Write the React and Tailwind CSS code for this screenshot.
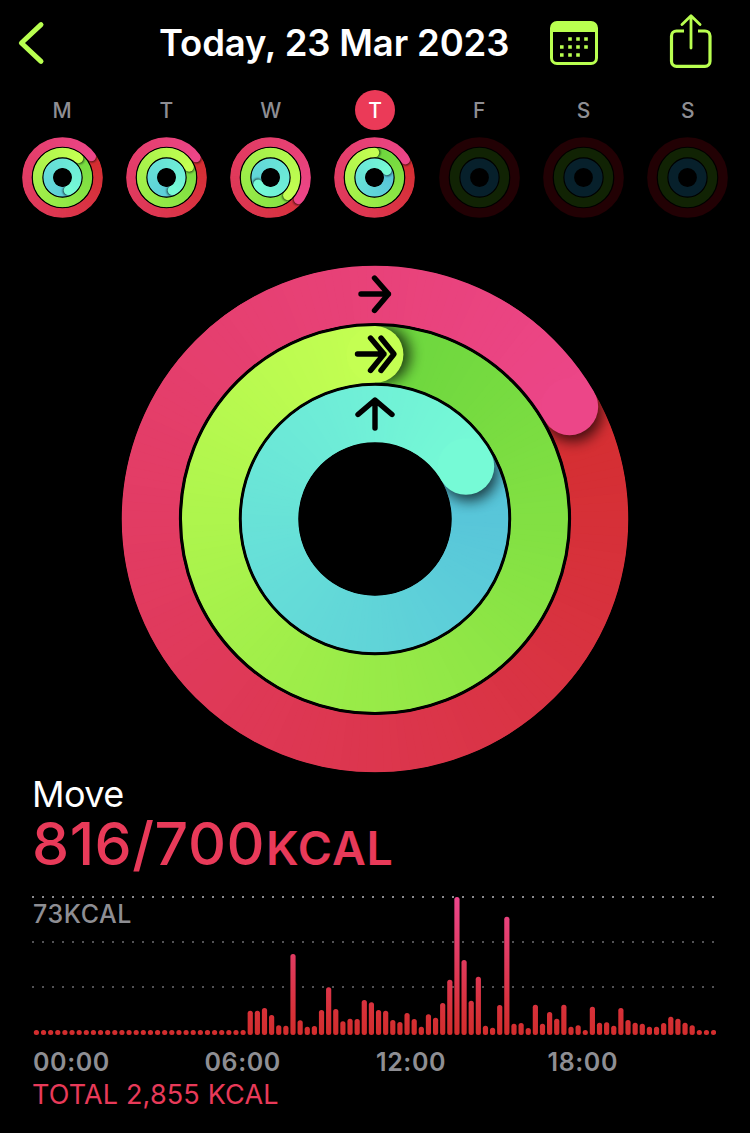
import React from 'react';

const CENTER = 256;

const COLORS = {
  move: { from: [208, 42, 34], to: [236, 70, 136] },
  exercise: { from: [108, 214, 62], to: [196, 255, 82] },
  stand: { from: [80, 184, 218], to: [118, 250, 214] },
};

const DIM = { move: '#220104', exercise: '#112304', stand: '#07202b' };

const LARGE = [
  { id: 'move', r: 224.7, w: 57.2 },
  { id: 'exercise', r: 164.6, w: 56.8 },
  { id: 'stand', r: 105, w: 56.6 },
];

const SMALL = [
  { id: 'move', r: 225, w: 60 },
  { id: 'exercise', r: 157.5, w: 60 },
  { id: 'stand', r: 90, w: 61 },
];

const DAYS = [
  { label: 'M', ends: [414, 400, 515] },
  { label: 'T', ends: [416, 425, 515] },
  { label: 'W', ends: [488, 496, 601] },
  { label: 'T', ends: [420, 360, 420], today: true },
  { label: 'F' },
  { label: 'S' },
  { label: 'S' },
];

const BARS = [
  ...Array(30).fill(5),
  24.3, 24.3, 27, 20, 9.7, 9.3, 81, 14.7, 8.3, 9, 25, 47.7, 26, 13.7, 16.3, 16, 35, 32.7,
  25, 24.3, 15, 13, 22, 16, 8.3, 20.7, 17.3, 32, 55.3, 138, 75, 34.3, 58.3, 9.3, 7.3, 30,
  118.3, 11.3, 12, 7, 30.3, 11.3, 23, 16.3, 30.3, 8.3, 9.7, 5, 28.3, 12.3, 12.7, 9.3, 27,
  15, 12.3, 11.3, 8.3, 8.3, 12, 18.3, 16.3, 12.3, 9.7, 5, 5, 5,
];

function point(r, deg) {
  const a = ((deg - 90) * Math.PI) / 180;
  return [CENTER + r * Math.cos(a), CENTER + r * Math.sin(a)];
}

function mix({ from, to }, t) {
  return `rgb(${from.map((c, i) => Math.round(c + (to[i] - c) * t)).join(',')})`;
}

// Draws part of a ring as overlapping strokes so the colour can follow the angle.
function Arc({ ring, start, end, step }) {
  const parts = [];
  for (let a = start; a < end; a += step) {
    const [x1, y1] = point(ring.r, a);
    const [x2, y2] = point(ring.r, Math.min(a + step * 3, end));
    parts.push(
      <path
        key={a}
        d={`M${x1} ${y1}A${ring.r} ${ring.r} 0 0 1 ${x2} ${y2}`}
        fill="none"
        stroke={mix(COLORS[ring.id], a / end)}
        strokeWidth={ring.w}
      />
    );
  }
  return parts;
}

function Ring({ ring, end, name, step }) {
  const [cx, cy] = point(ring.r, end);
  const [sx, sy] = point(ring.r, end + 400 / ring.r);
  const mask = `${name}-${ring.id}`;
  const full = { cx: CENTER, cy: CENTER, r: ring.r, fill: 'none', strokeWidth: ring.w };
  return (
    <g>
      <mask id={mask} maskUnits="userSpaceOnUse" x="0" y="0" width="512" height="512">
        <circle {...full} stroke="#fff" />
      </mask>
      <g mask={`url(#${mask})`}>
        <circle {...full} stroke={mix(COLORS[ring.id], 0.5)} />
        <Arc ring={ring} start={end - 360} end={end} step={step} />
        <circle cx={sx} cy={sy} r={ring.w / 2} fill="#000" opacity="0.7" filter={`url(#${name}-blur)`} />
        <Arc ring={ring} start={end - 70} end={end} step={step} />
        <circle cx={cx} cy={cy} r={ring.w / 2} fill={mix(COLORS[ring.id], 1)} />
      </g>
    </g>
  );
}

function Rings({ name, rings, ends, step, className, children }) {
  return (
    <svg viewBox="0 0 512 512" className={className}>
      <filter id={`${name}-blur`} x="-50%" y="-50%" width="200%" height="200%">
        <feGaussianBlur stdDeviation="7" />
      </filter>
      {rings.map((ring, i) =>
        ends ? (
          <Ring key={ring.id} ring={ring} end={ends[i]} name={name} step={step} />
        ) : (
          <circle key={ring.id} cx={CENTER} cy={CENTER} r={ring.r} fill="none" stroke={DIM[ring.id]} strokeWidth={ring.w} />
        )
      )}
      {children}
    </svg>
  );
}

function Header() {
  return (
    <header className="flex h-[90px] items-start text-[#b9ff50]">
      <svg viewBox="0 0 30 46" className="ml-4 mt-5 h-[46px] w-[30px]" fill="none" stroke="currentColor" strokeWidth="5" strokeLinecap="round" strokeLinejoin="round">
        <path d="M25 4.6L5.4 23L25 41.4" />
      </svg>
      <h1 className="ml-[113px] mt-[18px] w-[353px] whitespace-nowrap text-[36.5px] leading-[50px] font-semibold tracking-[-0.15px] text-white">
        Today, 23 Mar 2023
      </h1>
      <svg viewBox="0 0 48 44" className="ml-[38px] mt-[21px] h-11 w-12" fill="none" stroke="currentColor">
        <rect x="1.5" y="1.5" width="45" height="41" rx="5.5" strokeWidth="3" />
        <path d="M1.5 11V7.5a6 6 0 0 1 6-6h33a6 6 0 0 1 6 6V11z" fill="currentColor" stroke="none" />
        <path d="M18.2 18h3.6M26.2 18h3.6M34.2 18h3.6M10 26h3.6M18.2 26h3.6M26.2 26h3.6M34.2 26h3.6M10 34h3.6M18.2 34h3.6M26.2 34h3.6" strokeWidth="3.6" />
      </svg>
      <svg viewBox="0 0 44 56" className="ml-[71px] mt-[14px] h-14 w-11" fill="none" stroke="currentColor" strokeWidth="3.2" strokeLinecap="round" strokeLinejoin="round">
        <path d="M15 17H7.5a5 5 0 0 0-5 5V47.3a5 5 0 0 0 5 5h28.5a5 5 0 0 0 5-5V22a5 5 0 0 0-5-5H29" strokeLinecap="butt" />
        <path d="M22 34V2.5M13 10.5L22 1.8L31 10.5" strokeWidth="2.8" />
      </svg>
    </header>
  );
}

function Week() {
  return (
    <div className="grid grid-cols-7 px-[10px]">
      {DAYS.map((day, i) => (
        <div key={i} className="flex flex-col items-center">
          <span
            className={`flex size-10 items-center justify-center rounded-full pt-0.5 text-[21px] font-medium ${
              day.today ? 'bg-[#eb3a58] text-white' : 'text-[#8e8e93]'
            }`}
          >
            {day.label}
          </span>
          <Rings name={`day${i}`} rings={SMALL} ends={day.ends} step={4} className="mt-[7px] size-[81px]" />
        </div>
      ))}
    </div>
  );
}

function Chart() {
  return (
    <svg viewBox="0 0 684 140" className="col-start-1 row-start-1 h-[140px] w-[684px]">
      <linearGradient id="bars" gradientUnits="userSpaceOnUse" x1="0" y1="139" x2="0" y2="1">
        <stop offset="0" stopColor="#d22d2d" />
        <stop offset="0.15" stopColor="#d63036" />
        <stop offset="1" stopColor="#ec468c" />
      </linearGradient>
      {[1, 46, 91].map((y) => (
        <line key={y} x1="0" x2="682" y1={y} y2={y} stroke={y === 1 ? '#8b8b8f' : '#525255'} strokeWidth="2" strokeDasharray="2 8" />
      ))}
      {BARS.map((h, i) => (
        <rect key={i} x={1.8 + i * 7.128} y={139 - h} width="5.2" height={h} rx="2.5" fill="url(#bars)" />
      ))}
    </svg>
  );
}

export default function App() {
  return (
    <div className="h-[1133px] w-[750px] overflow-hidden bg-black font-['Inter','Liberation_Sans',sans-serif]">
      <Header />
      <Week />
      <Rings name="today" rings={LARGE} ends={[420, 360, 420]} step={2} className="mx-auto mt-[45px] size-[512px]">
        <g fill="none" stroke="#000" strokeWidth="5.4" strokeLinecap="round" strokeLinejoin="round">
          <path d="M242 31H269.5M255.5 15L269.5 31L255.5 47.5" />
          <path d="M238.5 91H265M251.5 75L265 91L251.5 107.5M262 75L275 91L262 107.5" />
          <path d="M256 165V137.5M239 151.5L256 137L273 151.5" />
        </g>
      </Rings>
      <section className="-mt-[3px] px-8">
        <h2 className="text-[36px] leading-[44px] tracking-[-0.6px] text-white">Move</h2>
        <p className="whitespace-nowrap text-[59px] leading-[56px] font-medium tracking-[0.5px] text-[#e83a59]">
          816/700<span className="ml-px text-[46.5px] font-semibold tracking-[0.9px]">KCAL</span>
        </p>
        <div className="mt-5 grid">
          <Chart />
          <span className="col-start-1 row-start-1 mt-1 ml-px text-[25px] leading-[28px] font-medium tracking-[0.6px] text-[#8e8e93]">73KCAL</span>
        </div>
        <div className="mt-[10px] ml-px grid w-[686px] grid-cols-4 text-[25px] leading-8 font-semibold tracking-[0.6px] text-[#8e8e93]">
          <span>00:00</span>
          <span>06:00</span>
          <span>12:00</span>
          <span>18:00</span>
        </div>
        <p className="mt-px text-[27px] leading-8 tracking-[0.15px] text-[#e83a59]">TOTAL 2,855 KCAL</p>
      </section>
    </div>
  );
}
